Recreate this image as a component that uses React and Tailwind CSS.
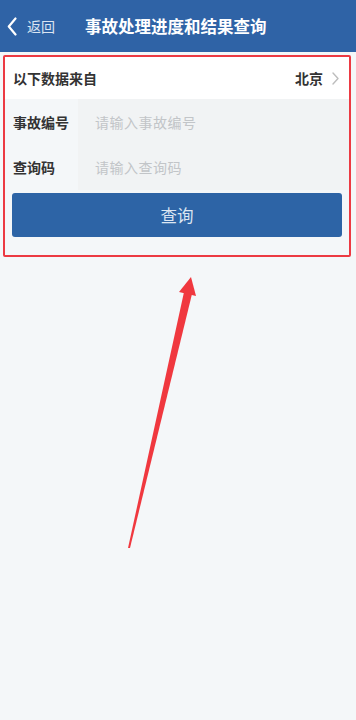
import React from "react";

const font = { fontFamily: '"Noto Sans CJK SC", "Noto Sans", sans-serif' };

const App = () => {
  return (
    <div className="relative w-[356px] h-[720px] bg-[#f4f7f9] overflow-hidden" style={font}>
      {/* Header */}
      <div className="h-[52px] bg-[#2f63a6] flex items-center text-white">
        <div className="flex items-center pl-[7px] w-[80px]">
          <svg width="10" height="19" viewBox="0 0 10 19" fill="none">
            <path d="M8.5 1.5 L1.8 9.5 L8.5 17.5" stroke="#ffffff" strokeWidth="2.2" strokeLinecap="round" strokeLinejoin="round" />
          </svg>
          <span className="ml-[10px] text-[14px] text-[#dbe5f2]">返回</span>
        </div>
        <h1 className="ml-[5px] text-[16.5px] font-bold">事故处理进度和结果查询</h1>
      </div>

      {/* Query card */}
      <div className="mt-[3px] mx-[3px] w-[348px] border-2 border-[#ec3a43] rounded-[2px]">
        <div className="h-[42px] bg-white flex items-center justify-between pl-[8px] pr-[10px]">
          <span className="text-[14px] font-semibold text-[#333]">以下数据来自</span>
          <div className="flex items-center gap-[9px]">
            <span className="text-[14px] font-semibold text-[#333]">北京</span>
            <svg width="7" height="13" viewBox="0 0 7 13" fill="none">
              <path d="M1 1 L6 6.5 L1 12" stroke="#bdbdbd" strokeWidth="1.4" strokeLinecap="round" strokeLinejoin="round" />
            </svg>
          </div>
        </div>
        <div className="h-[46px] flex items-center">
          <span className="w-[73px] pl-[8px] text-[14px] font-semibold text-[#333]">事故编号</span>
          <div className="flex-1 h-full bg-[#f1f3f4] flex items-center pl-[17px]">
            <span className="text-[14px] text-[#c2c5c8] tracking-[0.5px]">请输入事故编号</span>
          </div>
        </div>
        <div className="h-[45px] flex items-center">
          <span className="w-[73px] pl-[8px] text-[14px] font-semibold text-[#333]">查询码</span>
          <div className="flex-1 h-full bg-[#f1f3f4] flex items-center pl-[17px]">
            <span className="text-[14px] text-[#c2c5c8] tracking-[0.5px]">请输入查询码</span>
          </div>
        </div>
        <div className="pt-[3px] pb-[18px] px-[7px]">
          <button className="w-full h-[44px] rounded-[3px] bg-[#2d64a6] text-[16.5px] text-[#dce6f2] flex items-center justify-center">
            查询
          </button>
        </div>
      </div>

      {/* Annotation arrow */}
      <svg className="absolute left-0 top-0" width="356" height="720" viewBox="0 0 356 720">
        <polygon points="191,277 179,292 196,296" fill="#f0383f" />
        <polygon points="184,292 192,294 130,548 128,548" fill="#f0383f" />
      </svg>
    </div>
  );
};

export default App;
